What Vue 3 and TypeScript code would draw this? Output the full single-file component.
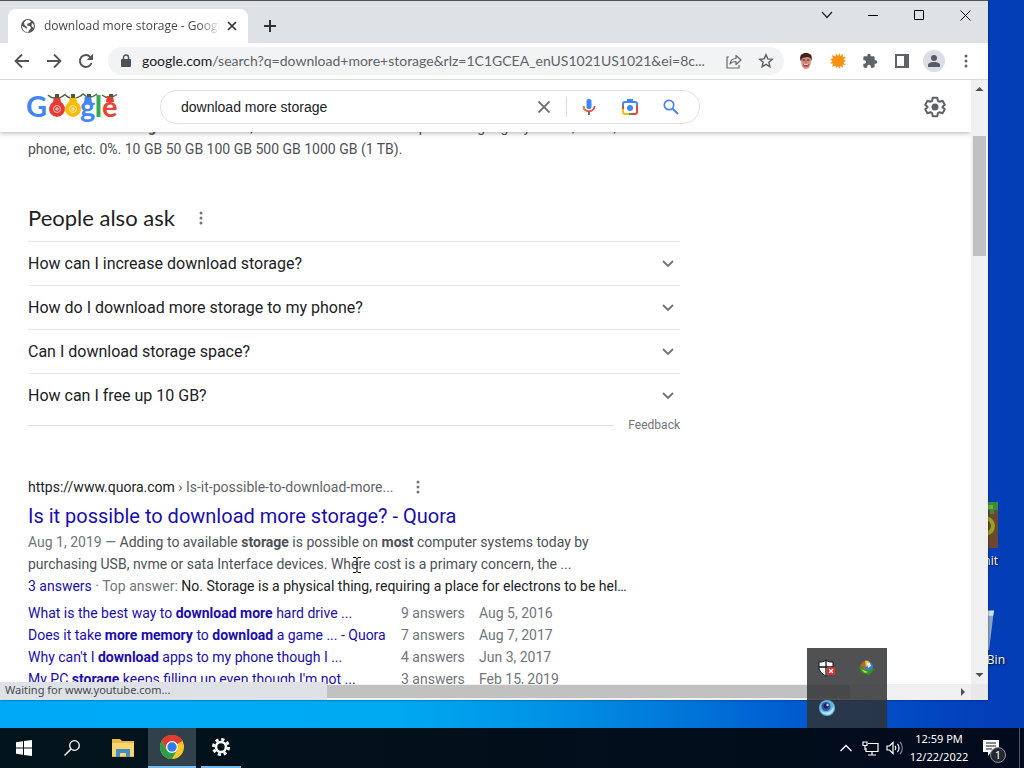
<script setup lang="ts">
import { ref } from 'vue'

interface Piece { text: string; bold?: boolean }
interface Related { title: Piece[]; answers: string; date: string }

const address = ref('google.com/search?q=download+more+storage')
const query = ref('download more storage')

const questions: string[] = [
  'How can I increase download storage?',
  'How do I download more storage to my phone?',
  'Can I download storage space?',
  'How can I free up 10 GB?',
]

const related: Related[] = [
  {
    title: [{ text: 'What is the best way to ' }, { text: 'download more', bold: true }, { text: ' hard drive ...' }],
    answers: '9 answers',
    date: 'Aug 5, 2016',
  },
  {
    title: [{ text: 'Does it take ' }, { text: 'more memory', bold: true }, { text: ' to ' }, { text: 'download', bold: true }, { text: ' a game ... - Quora' }],
    answers: '7 answers',
    date: 'Aug 7, 2017',
  },
  {
    title: [{ text: "Why can't I " }, { text: 'download', bold: true }, { text: ' apps to my phone though I ...' }],
    answers: '4 answers',
    date: 'Jun 3, 2017',
  },
  {
    title: [{ text: 'My PC ' }, { text: 'storage', bold: true }, { text: " keeps filling up even though I'm not ..." }],
    answers: '3 answers',
    date: 'Feb 15, 2019',
  },
]
</script>

<template>
  <div class="desktop">
    <div class="workspace">
      <div class="shortcut first">
        <svg width="22" height="46" viewBox="0 0 22 46" aria-hidden="true">
          <rect width="22" height="46" fill="#6d4630" />
          <path d="M0 0h22v8h-4v4h-4V8H9v5H0z" fill="#3f8a35" />
          <path d="M12 3h5v4h-5z" fill="#63b04c" />
          <circle cx="9" cy="24" r="8" fill="none" stroke="#93a51f" stroke-width="4" />
        </svg>
        <span>nit</span>
      </div>
      <div class="shortcut second">
        <svg width="18" height="40" viewBox="0 0 18 40" aria-hidden="true">
          <path d="M0 2l17-2-5 40H0z" fill="#8da4c4" />
          <path d="M0 0l17 1-1 5-16-1z" fill="#cfe0f2" />
        </svg>
        <span>Bin</span>
      </div>

      <section class="window">
        <div class="tabstrip">
          <div class="tab">
            <svg width="16" height="16" viewBox="0 0 16 16" aria-hidden="true">
              <circle cx="8" cy="8" r="7" fill="#53575b" />
              <path d="M6 2.500c2-1 4 0 5 1L9.500 5l-2 .5-.5 2 3 .5 1 2-2 2.500-1 2C4 14 2 11 2 8l3 1.500L6.500 11 7 9 4.500 7 4 4.500z" fill="#fff" />
              <path d="M12 5l2 2-.5 3-2-2z" fill="#fff" />
            </svg>
            <span class="tab-title">download more storage - Google</span>
            <button class="icon-button tab-close" aria-label="Close tab">
              <svg width="10" height="10" viewBox="0 0 10 10"><path d="M1 1l8 8M9 1L1 9" stroke="#303236" stroke-width="1.700" /></svg>
            </button>
          </div>
          <button class="icon-button new-tab" aria-label="New tab">
            <svg width="12" height="12" viewBox="0 0 12 12"><path d="M6 0v12M0 6h12" stroke="#303236" stroke-width="2" /></svg>
          </button>
          <div class="window-controls">
            <button aria-label="Search tabs"><svg width="12" height="8" viewBox="0 0 12 8"><path d="M1 1l5 5.500L11 1" fill="none" stroke="#222" stroke-width="1.200" /></svg></button>
            <button aria-label="Minimize"><svg width="10" height="10" viewBox="0 0 10 10"><path d="M0 5.500h10" stroke="#000" /></svg></button>
            <button aria-label="Maximize"><svg width="10" height="10" viewBox="0 0 10 10"><path d="M.5.500h9v9h-9z" fill="none" stroke="#000" /></svg></button>
            <button aria-label="Close window"><svg width="11" height="11" viewBox="0 0 11 11"><path d="M.5.500l10 10M10.500.500l-10 10" stroke="#000" /></svg></button>
          </div>
        </div>

        <div class="toolbar">
          <button class="icon-button" aria-label="Back"><svg width="16" height="16" viewBox="0 0 16 16"><path d="M15 8H2M8 1.500L1.500 8 8 14.500" fill="none" stroke="#505357" stroke-width="1.800" /></svg></button>
          <button class="icon-button" aria-label="Forward"><svg width="16" height="16" viewBox="0 0 16 16"><path d="M1 8h13M8 1.500L14.500 8 8 14.500" fill="none" stroke="#505357" stroke-width="1.800" /></svg></button>
          <button class="icon-button" aria-label="Reload"><svg width="16" height="16" viewBox="0 0 16 16"><path d="M13.500 10A6 6 0 1 1 12.400 4" fill="none" stroke="#505357" stroke-width="1.900" /><path d="M15 .800V7H8.800z" fill="#505357" /></svg></button>
          <div class="omnibox">
            <svg class="lock" width="10" height="14" viewBox="0 0 10 14" aria-hidden="true"><rect x="0" y="5" width="10" height="8" rx="1" fill="#4d5156" /><path d="M2.500 6V3.500a2.500 2.500 0 0 1 5 0V6" fill="none" stroke="#4d5156" stroke-width="1.400" /></svg>
            <a class="address" :href="'#' + address"><span class="host">google.com</span>/search?q=download+more+storage&amp;rlz=1C1GCEA_enUS1021US1021&amp;ei=8c...</a>
            <button class="icon-button" aria-label="Share this page">
              <svg width="16" height="16" viewBox="0 0 16 16"><path d="M3 4H1v11h12v-3" fill="none" stroke="#66696d" stroke-width="1.200" /><path d="M4 11c.5-4 3-5.500 6-5.500V2.500l5 4.500-5 4.500v-3C7.500 8.500 5.500 9 4 11z" fill="none" stroke="#66696d" stroke-width="1.200" stroke-linejoin="round" /></svg>
            </button>
            <button class="icon-button" aria-label="Bookmark this page">
              <svg width="16" height="16" viewBox="0 0 16 16"><path d="M8 1.800l1.800 4.100 4.400.4-3.300 3 1 4.400L8 11.400l-3.900 2.300 1-4.400-3.300-3 4.400-.4z" fill="none" stroke="#5f6368" stroke-width="1.500" /></svg>
            </button>
          </div>
          <button class="icon-button" aria-label="Face extension">
            <svg width="14" height="16" viewBox="0 0 14 16">
              <path d="M2 6c0-6 10-6 10 0 0 5-1 10-5 10S2 11 2 6z" fill="#d98f80" />
              <path d="M1.500 8C0 2 3 0 7 0s7 2 5.500 8l-1-3-3-1-5 1z" fill="#44231d" />
              <path d="M3.500 7h2.500M8 7h2.500" stroke="#3c1d1b" stroke-width="1.200" /><path d="M7 7v3" stroke="#a65850" />
              <path d="M4 11h6l-1 2.500H5z" fill="#b8333c" /><path d="M5 11.500h4" stroke="#fff" stroke-width=".8" />
            </svg>
          </button>
          <button class="icon-button" aria-label="Splat extension">
            <svg width="16" height="16" viewBox="0 0 16 16"><path d="M8 3l1.500-3 .7 3L13 1l-.3 3L16 4l-2.500 2.500L16 8l-2.700 1.500L16 12l-3.500-.5.5 3.500-2.600-2L9.500 16 8 13l-2 2.500-.5-3L2 14l1.200-3.500L0 10.500 2.500 8 0 6l3-.5L2 2l3.500 1.500L6 .5z" fill="#f5920d" /></svg>
          </button>
          <button class="icon-button" aria-label="Extensions">
            <svg width="16" height="16" viewBox="0 0 24 24"><path d="M20.500 11H19V7a2 2 0 0 0-2-2h-4V3.500a2.500 2.500 0 0 0-5 0V5H4a2 2 0 0 0-2 2v3.800h1.500a2.700 2.700 0 0 1 0 5.400H2V20a2 2 0 0 0 2 2h3.800v-1.500a2.700 2.700 0 0 1 5.400 0V22H17a2 2 0 0 0 2-2v-4h1.500a2.500 2.500 0 0 0 0-5z" fill="#5f6368" /></svg>
          </button>
          <button class="icon-button" aria-label="Side panel">
            <svg width="14" height="14" viewBox="0 0 14 14"><path d="M0 0h14v14H0zM2 2v10h7V2z" fill="#5f6368" fill-rule="evenodd" /></svg>
          </button>
          <button class="icon-button" aria-label="Profile">
            <svg width="22" height="22" viewBox="0 0 22 22"><circle cx="11" cy="11" r="11" fill="#dcdde5" /><circle cx="11" cy="8" r="3" fill="#555b66" /><path d="M5 17v-2c0-4 12-4 12 0v2z" fill="#555b66" /></svg>
          </button>
          <button class="icon-button" aria-label="Browser menu">
            <svg width="4" height="14" viewBox="0 0 4 14" fill="#5f6368"><circle cx="2" cy="2" r="1.500" /><circle cx="2" cy="7" r="1.500" /><circle cx="2" cy="12" r="1.500" /></svg>
          </button>
        </div>

        <div class="viewport">
          <div class="page">
            <header class="search-header">
              <a class="logo" href="#" aria-label="Google">
                <svg width="92" height="34" viewBox="0 0 92 34">
                  <g class="logo-letters">
                    <text x="-1" y="27" fill="#4285f4">G</text>
                    <text x="53" y="27" fill="#4285f4">g</text>
                    <text x="75" y="27" fill="#ea4335">e</text>
                  </g>
                  <path d="M71.500 5v22" stroke="#34a853" stroke-width="4" />
                  <path d="M21 5c5 5 12 4 17-.5 4 5 12 5 18-.5 4 4 9 4 14 0M75 5c5 4 10 3 15-.5" fill="none" stroke="#4f6b46" stroke-width="1.500" />
                  <path d="M27 7h6l1 5a8 8 0 1 1-8 0z" fill="#e53b32" />
                  <path d="M43 7h6l1 5a8 8 0 1 1-8 0z" fill="#fbbc05" />
                  <path d="M58 6h6l1 7h-8z" fill="#4285f4" />
                  <path d="M80 6h6l1 6h-8z" fill="#e53b32" />
                  <path d="M28 4h4v4h-4zM44 4h4v4h-4zM60 4h4v3h-4zM82 4h4v3h-4z" fill="#45603c" />
                  <g fill="none" stroke="#fff" stroke-opacity=".7"><circle cx="30" cy="19" r="3.500" /><circle cx="46" cy="19" r="3.500" /><path d="M28 19h4M44 19h4M30 17v4M46 17v4" /></g>
                </svg>
              </a>
              <form class="search-box" role="search" @submit.prevent>
                <input v-model="query" type="text" aria-label="Search" />
                <button type="button" class="clear" aria-label="Clear" @click="query = ''"><svg width="12" height="12" viewBox="0 0 12 12"><path d="M.5.500l11 11M11.500.500l-11 11" stroke="#66696d" stroke-width="1.700" /></svg></button>
                <span class="divider"></span>
                <button type="button" aria-label="Search by voice">
                  <svg width="14" height="18" viewBox="0 0 14 18"><rect x="4.500" y="1" width="5" height="10" rx="2" fill="#4285f4" /><path d="M1.500 8c0 7 11 7 11 0" fill="none" stroke="#ea4335" stroke-width="1.700" /><path d="M1.500 8c0 2.500 1 4 2.500 4.700" fill="none" stroke="#c98a48" stroke-width="1.700" /><path d="M7 13.500V17" stroke="#7a7148" stroke-width="2" /></svg>
                </button>
                <button type="button" aria-label="Search by image">
                  <svg width="18" height="18" viewBox="0 0 18 18" fill="none" stroke-width="2"><path d="M2 9V6a2 2 0 0 1 2-2h10a2 2 0 0 1 2 2v2" stroke="#4285f4" /><path d="M6 2h6" stroke="#4285f4" /><path d="M2 8v4" stroke="#ea4335" /><path d="M2 11v3a2 2 0 0 0 2 2h5" stroke="#fbbc05" /><path d="M16 8v6a2 2 0 0 1-2 2H9" stroke="#ea4335" /><path d="M8 16h3" stroke="#34a853" /><circle cx="9" cy="10" r="3" fill="#4285f4" /></svg>
                </button>
                <button type="submit" aria-label="Search">
                  <svg width="16" height="16" viewBox="0 0 16 16"><circle cx="6" cy="6" r="4.700" fill="none" stroke="#4f80ee" stroke-width="1.700" /><path d="M9.500 9.500l5.500 5.500" stroke="#4f80ee" stroke-width="2" /></svg>
                </button>
              </form>
              <button class="icon-button settings" aria-label="Settings">
                <svg width="24" height="24" viewBox="0 0 24 24"><path d="M9.700 2.800h4.600l.6 3 1.700 1 2.900-1 2.300 4-2.300 2v.400l2.300 2-2.300 4-2.900-1-1.700 1-.6 3H9.700l-.6-3-1.700-1-2.900 1-2.300-4 2.300-2v-.4l-2.300-2 2.300-4 2.900 1 1.700-1z" fill="none" stroke="#5f6368" stroke-width="2" stroke-linejoin="round" /><circle cx="12" cy="12" r="3.500" fill="#5f6368" /></svg>
              </button>
            </header>

            <main class="results">
              <p class="snippet">Find out what <b>storage</b> of files needs, what the limits are for the phone or gadget you use, tablet,<br />phone, etc. 0%. 10 GB 50 GB 100 GB 500 GB 1000 GB (1 TB).</p>

              <section class="also-ask">
                <div class="also-ask-head">
                  <h2>People also ask</h2>
                  <button class="dots" aria-label="About this section"><svg width="4" height="14" viewBox="0 0 4 14" fill="#70757a"><circle cx="2" cy="2" r="1.500" /><circle cx="2" cy="7" r="1.500" /><circle cx="2" cy="12" r="1.500" /></svg></button>
                </div>
                <button v-for="q in questions" :key="q" class="question">
                  <span>{{ q }}</span>
                  <svg width="12" height="8" viewBox="0 0 12 8" aria-hidden="true"><path d="M1 1l5 5 5-5" fill="none" stroke="#70757a" stroke-width="1.900" /></svg>
                </button>
                <div class="feedback"><span class="rule"></span><a href="#">Feedback</a></div>
              </section>

              <article class="result">
                <div class="source">
                  <cite>https://www.quora.com <span>› Is-it-possible-to-download-more...</span></cite>
                  <button class="dots" aria-label="About this result"><svg width="4" height="14" viewBox="0 0 4 14" fill="#70757a"><circle cx="2" cy="2" r="1.500" /><circle cx="2" cy="7" r="1.500" /><circle cx="2" cy="12" r="1.500" /></svg></button>
                </div>
                <h3><a href="#">Is it possible to download more storage? - Quora</a></h3>
                <p class="snippet"><span class="muted">Aug 1, 2019 — </span>Adding to available <b>storage</b> is possible on <b>most</b> computer systems today by purchasing USB, nvme or sata Interface devices. Where cost is a primary concern, the ...</p>
                <p class="top-answer"><a href="#">3 answers</a> · <span>Top answer: </span><em>No. Storage is a physical thing, requiring a place for electrons to be hel…</em></p>
                <table>
                  <tbody>
                    <tr v-for="(row, i) in related" :key="i">
                      <td class="title"><a href="#"><template v-for="(piece, j) in row.title" :key="j"><b v-if="piece.bold">{{ piece.text }}</b><template v-else>{{ piece.text }}</template></template></a></td>
                      <td class="answers">{{ row.answers }}</td>
                      <td>{{ row.date }}</td>
                    </tr>
                  </tbody>
                </table>
              </article>
            </main>

            <svg class="caret" width="8" height="16" viewBox="0 0 8 16" aria-hidden="true"><path d="M0 .5h3L4 1.500 5 .5h3M0 15.500h3l1-1 1 1h3M4 1v14" fill="none" stroke="#000" /></svg>
          </div>

          <div class="scrollbar vertical">
            <svg width="17" height="17" viewBox="0 0 17 17" aria-hidden="true"><path d="M4.500 11l4-4 4 4z" fill="#505050" /></svg>
            <span class="before"></span><span class="thumb"></span><span class="after"></span>
            <svg width="17" height="17" viewBox="0 0 17 17" aria-hidden="true"><path d="M4.500 6l4 4 4-4z" fill="#505050" /></svg>
          </div>
          <div class="scrollbar horizontal">
            <span class="thumb"></span><span class="after"></span>
            <svg width="17" height="16" viewBox="0 0 17 16" aria-hidden="true"><path d="M7 4l4 4-4 4z" fill="#505050" /></svg>
          </div>
          <div class="corner"></div>
        </div>
        <div class="status">Waiting for www.youtube.com...</div>
      </section>

      <div class="tray-popup">
        <button aria-label="Windows Security">
          <svg width="18" height="18" viewBox="0 0 18 18"><path d="M8 1c2 2 4 2 7 2v5c0 4-3 7-7 9-4-2-7-5-7-9V3c3 0 5 0 7-2z" fill="#fff" stroke="#111" /><path d="M8 2v14M1 8h14" stroke="#111" stroke-width="1.300" /><rect x="9" y="8" width="8" height="8" rx="1" fill="#d92b30" /><path d="M11 10l4 4M15 10l-4 4" stroke="#fff" stroke-width="1.300" /></svg>
        </button>
        <button aria-label="Download manager">
          <svg width="18" height="16" viewBox="0 0 18 16"><circle cx="9" cy="7" r="6" fill="#3d7cd0" /><path d="M2 8C2 3 6 0 10 1.500L7 9z" fill="#b9641f" /><path d="M7 1c2-1 4 0 5 2L8 7z" fill="#d8d045" /><path d="M9 3l3 0 1 3-3 2z" fill="#e8f1fb" /><path d="M1 7l3-1 2 4 11-1-6 6-7-2z" fill="#2f9426" /><path d="M3 9l7 3-3 1z" fill="#c4dc39" /></svg>
        </button>
        <button aria-label="Assistant">
          <svg width="16" height="16" viewBox="0 0 16 16"><circle cx="8" cy="8" r="8" fill="#67b3dc" /><path d="M1 10c4 4 11 3 14-4 1 9-10 12-14 4z" fill="#b3e6f2" /><circle cx="7" cy="6.500" r="4.500" fill="#3a4fa6" /><circle cx="7" cy="6" r="2.500" fill="#1d2254" /><circle cx="8.500" cy="5" r="1.200" fill="#b7dff3" /></svg>
        </button>
      </div>
    </div>

    <footer class="taskbar">
      <button aria-label="Start"><svg width="16" height="16" viewBox="0 0 16 16"><path d="M0 2.200L7 1.200v6.300H0zM8 1l8-1v7.500H8zM0 8.500h7v6.300l-7-1zM8 8.500h8V16l-8-1z" fill="#fff" /></svg></button>
      <button aria-label="Search"><svg width="16" height="16" viewBox="0 0 16 16"><circle cx="10.500" cy="5.500" r="4.800" fill="none" stroke="#fff" stroke-width="1.300" /><path d="M7 9L.5 15.500" stroke="#fff" stroke-width="1.500" /></svg></button>
      <button class="explorer" aria-label="File Explorer">
        <svg width="22" height="18" viewBox="0 0 22 18"><path d="M0 0h8l2 2h12v16H0z" fill="#e9b84b" /><path d="M0 4h22v13H0z" fill="#fbd56e" /><path d="M4 18V10h14v8h-4v-4H8v4z" fill="#3f8fc6" /></svg>
      </button>
      <button class="active" aria-label="Google Chrome">
        <svg width="24" height="24" viewBox="0 0 24 24"><circle cx="12" cy="12" r="12" fill="#f9c922" /><path d="M12 12L1.600 6A12 12 0 0 1 22.400 6z" fill="#e33b2e" /><path d="M12 6h10.400A12 12 0 0 0 1.600 6L6.800 15z" fill="#e33b2e" /><path d="M1.600 6A12 12 0 0 0 12 24l5.200-9L12 12 6.800 15z" fill="#2f9e4c" /><circle cx="12" cy="12" r="6" fill="#fff" /><circle cx="12" cy="12" r="4.700" fill="#2f7de9" /></svg>
      </button>
      <button class="running" aria-label="Settings">
        <svg width="18" height="18" viewBox="0 0 18 18"><circle cx="9" cy="9" r="5" fill="none" stroke="#fff" stroke-width="2.600" /><circle cx="9" cy="9" r="7.600" fill="none" stroke="#fff" stroke-width="2.800" stroke-dasharray="3.200 2.770" /></svg>
      </button>

      <div class="tray">
        <button aria-label="Hidden icons"><svg width="12" height="8" viewBox="0 0 12 8"><path d="M.5 7L6 1.500 11.500 7" fill="none" stroke="#fff" stroke-width="1.300" /></svg></button>
        <button aria-label="Network"><svg width="17" height="15" viewBox="0 0 17 15" fill="none" stroke="#fff" stroke-width="1.200"><path d="M6 2.500h10v8H4V7M10 10.500V14M6 14h8" /><path d="M1 1h4v3.500H1zM3 4.500V9" /></svg></button>
        <button aria-label="Volume"><svg width="17" height="14" viewBox="0 0 17 14" fill="none" stroke="#fff" stroke-width="1.200"><path d="M1 5h2.500L7 1.500v11L3.500 9H1z" /><path d="M9 5c1 1 1 3 0 4M11.500 3c2 2 2 6 0 8" /><path d="M14 1c3 3 3 9 0 12" opacity=".5" /></svg></button>
        <time class="clock"><span>12:59 PM</span><span>12/22/2022</span></time>
        <button class="notifications" aria-label="Notifications, 1 new">
          <svg width="16" height="16" viewBox="0 0 16 16"><path d="M0 0h16v12h-8l-3 4v-4H0z" fill="#fff" /><path d="M3 3h10M3 6h10M3 9h6" stroke="#16181c" stroke-width="1.200" /></svg>
          <span class="badge">1</span>
        </button>
        <span class="show-desktop"></span>
      </div>
    </footer>
  </div>
</template>

<style>
body { margin: 0; overflow: hidden; }
</style>

<style scoped>
* { box-sizing: border-box; }
button { border: 0; background: none; padding: 0; margin: 0; font: inherit; color: inherit; cursor: default; }
a { text-decoration: none; color: inherit; }
svg { display: block; flex: none; }
h2, h3, p { margin: 0; font-weight: 400; }

.desktop {
  height: 100vh;
  display: flex;
  flex-direction: column;
  font-family: Roboto, "Liberation Sans", sans-serif;
  background: linear-gradient(90deg, #00a9f8 0%, #00aaf2 38%, #0093e6 53%, #0078da 66%, #0056cd 80%, #0340ba 95%, #033db5 100%);
}
.workspace { position: relative; flex: 1; min-height: 0; display: flex; padding: 0 36px 28px 0; }
.icon-button { width: 24px; height: 24px; display: flex; align-items: center; justify-content: center; flex: none; }

.shortcut { position: absolute; color: #fff; font: 12px/16px "Open Sans", sans-serif; text-shadow: 1px 1px 2px #000; display: flex; flex-direction: column; gap: 5px; }
.shortcut span { align-self: flex-end; }
.shortcut.first { right: 26px; top: 502px; }
.shortcut.second { right: 19px; top: 610px; gap: 2px; }
.shortcut.second svg { margin-right: 10px; }

.window {
  position: relative;
  flex: 1;
  min-width: 0;
  display: flex;
  flex-direction: column;
  background: #fff;
  border-top: 1px solid #55545c;
  box-shadow: 0 0 2px rgba(0, 0, 0, .6);
}
.tabstrip { height: 42px; background: #dee1e6; display: flex; flex: none; padding-left: 8px; }
.tab { width: 240px; margin-top: 8px; background: #fff; border-radius: 8px 8px 0 0; display: flex; align-items: center; padding: 0 4px 0 12px; }
.tab-title { flex: 1; min-width: 0; margin-left: 8px; overflow: hidden; white-space: nowrap; font: 12px/16px "Open Sans", sans-serif; color: #45484d; -webkit-mask-image: linear-gradient(90deg, #000 88%, transparent); mask-image: linear-gradient(90deg, #000 88%, transparent); }
.new-tab { margin: 13px 0 0 10px; }
.window-controls { margin-left: auto; display: flex; }
.window-controls button { width: 46px; height: 28px; display: flex; align-items: center; justify-content: center; }

.toolbar { height: 37px; flex: none; display: flex; align-items: center; gap: 8px; padding: 0 10px; border-bottom: 1px solid #d9dbde; }
.omnibox { flex: 1; min-width: 0; height: 28px; margin: 0 2px; padding: 0 6px 0 13px; border-radius: 14px; background: #f1f3f4; display: flex; align-items: center; gap: 8px; }
.address { flex: 1; min-width: 0; margin-left: 3px; white-space: nowrap; overflow: hidden; font: 14px/20px Lato, "Noto Sans", sans-serif; color: #5f6368; }
.host { color: #202124; }

.viewport { flex: 1; min-height: 0; display: grid; grid-template: minmax(0, 1fr) 16px / minmax(0, 1fr) 17px; }
.page { position: relative; overflow: hidden; }
.search-header { position: relative; z-index: 1; height: 52px; background: #fff; display: flex; align-items: center; padding: 2px 24px 0 27px; box-shadow: 0 1px 5px rgba(32, 33, 36, .35); }
.logo { width: 133px; flex: none; }
.logo-letters { font: 700 29px Lato, sans-serif; }
.search-box { width: 540px; height: 34px; border: 1px solid #dfe1e5; border-radius: 17px; display: flex; align-items: center; gap: 1px; padding: 0 8px 0 20px; }
.search-box input { flex: 1; min-width: 0; border: 0; outline: 0; padding: 0; background: none; color: #202124; font: 14px/20px "Liberation Sans", sans-serif; }
.search-box button { width: 40px; height: 32px; display: flex; align-items: center; justify-content: center; }
.divider { width: 1px; height: 20px; background: #dadce0; margin: 0 1px; }
.settings { margin-left: auto; }

.results { width: 652px; max-width: 100%; margin: -16px 0 0 28px; }
.snippet, .top-answer, table { font-size: 14px; line-height: 22px; color: #4d5156; }
.snippet { max-width: 600px; }
.dots { width: 12px; height: 22px; display: flex; align-items: center; justify-content: center; }
.also-ask { margin-top: 44px; }
.also-ask-head { display: flex; align-items: center; gap: 20px; margin-bottom: 9px; }
h2 { font: 22px/28px Lato, sans-serif; color: #202124; }
.question { width: 100%; height: 44px; border-top: 1px solid #e5e7ea; display: flex; align-items: center; justify-content: space-between; padding-right: 6px; font-size: 16px; color: #202124; }
.feedback { display: flex; align-items: center; gap: 14px; font-size: 12px; line-height: 16px; color: #70757a; }
.rule { flex: 1; height: 1px; background: #dadce0; }

.result { margin-top: 43px; }
.source { display: flex; align-items: center; gap: 18px; }
cite { font-style: normal; font-size: 14px; line-height: 22px; color: #202124; }
cite span { color: #5f6368; }
.muted { color: #70757a; }
h3 { margin: 5px 0 2px; font-size: 20px; line-height: 26px; color: #1a0dab; }
.top-answer { color: #70757a; white-space: nowrap; }
.top-answer a, .title a { color: #1a0dab; }
.top-answer em { font-style: normal; color: #202124; }
table { margin-top: 5px; border-collapse: collapse; color: #70757a; white-space: nowrap; }
td { padding: 0; }
.title { width: 373px; }
.answers { width: 78px; }
.caret { position: absolute; left: 353px; top: 477px; }

.scrollbar { display: flex; background: #f0f0f1; }
.vertical { flex-direction: column; }
.vertical .before { flex: 39; }
.vertical .thumb { flex: 120; margin: 0 2px; background: #c1c1c1; }
.vertical .after { flex: 411; }
.horizontal .thumb { flex: 850; margin: 1px 0 2px; background: #c1c1c1; }
.horizontal .after { flex: 104; }
.corner { background: #e8e8e8; }
.status { position: absolute; left: 0; bottom: 0; width: 327px; height: 18px; padding-left: 5px; background: #dee1e6; border-top-right-radius: 4px; color: #46494e; font: 11px/16px "Noto Sans", sans-serif; }

.tray-popup { position: absolute; right: 137px; bottom: 0; width: 80px; height: 80px; display: grid; grid-template: 1fr 1fr / 1fr 1fr; background: rgba(48, 50, 52, .85); }
.tray-popup button { display: flex; align-items: center; justify-content: center; }

.taskbar { height: 40px; flex: none; display: flex; color: #fff; background: linear-gradient(90deg, #02141b, #020f1b 50%, #020b1d); }
.taskbar button { width: 48px; height: 40px; display: flex; align-items: center; justify-content: center; }
.taskbar .explorer { width: 52px; padding-left: 2px; }
.taskbar .active { background: #31414b; border-bottom: 2px solid #76b9ed; }
.taskbar .running { width: 40px; margin-left: 5px; border-bottom: 2px solid #76b9ed; }
.tray { margin-left: auto; display: flex; align-items: center; }
.tray button { width: 24px; }
.clock { width: 66px; display: flex; flex-direction: column; align-items: center; font: 11px/18px "Noto Sans", sans-serif; }
.taskbar .notifications { position: relative; width: 47px; padding-right: 9px; }
.badge { position: absolute; left: 18px; top: 19px; width: 16px; height: 16px; border: 1px solid #8c9096; border-radius: 8px; background: #25282e; font: 11px/14px "Noto Sans", sans-serif; text-align: center; }
.show-desktop { width: 5px; height: 40px; border-left: 1px solid #4c5663; }
</style>
